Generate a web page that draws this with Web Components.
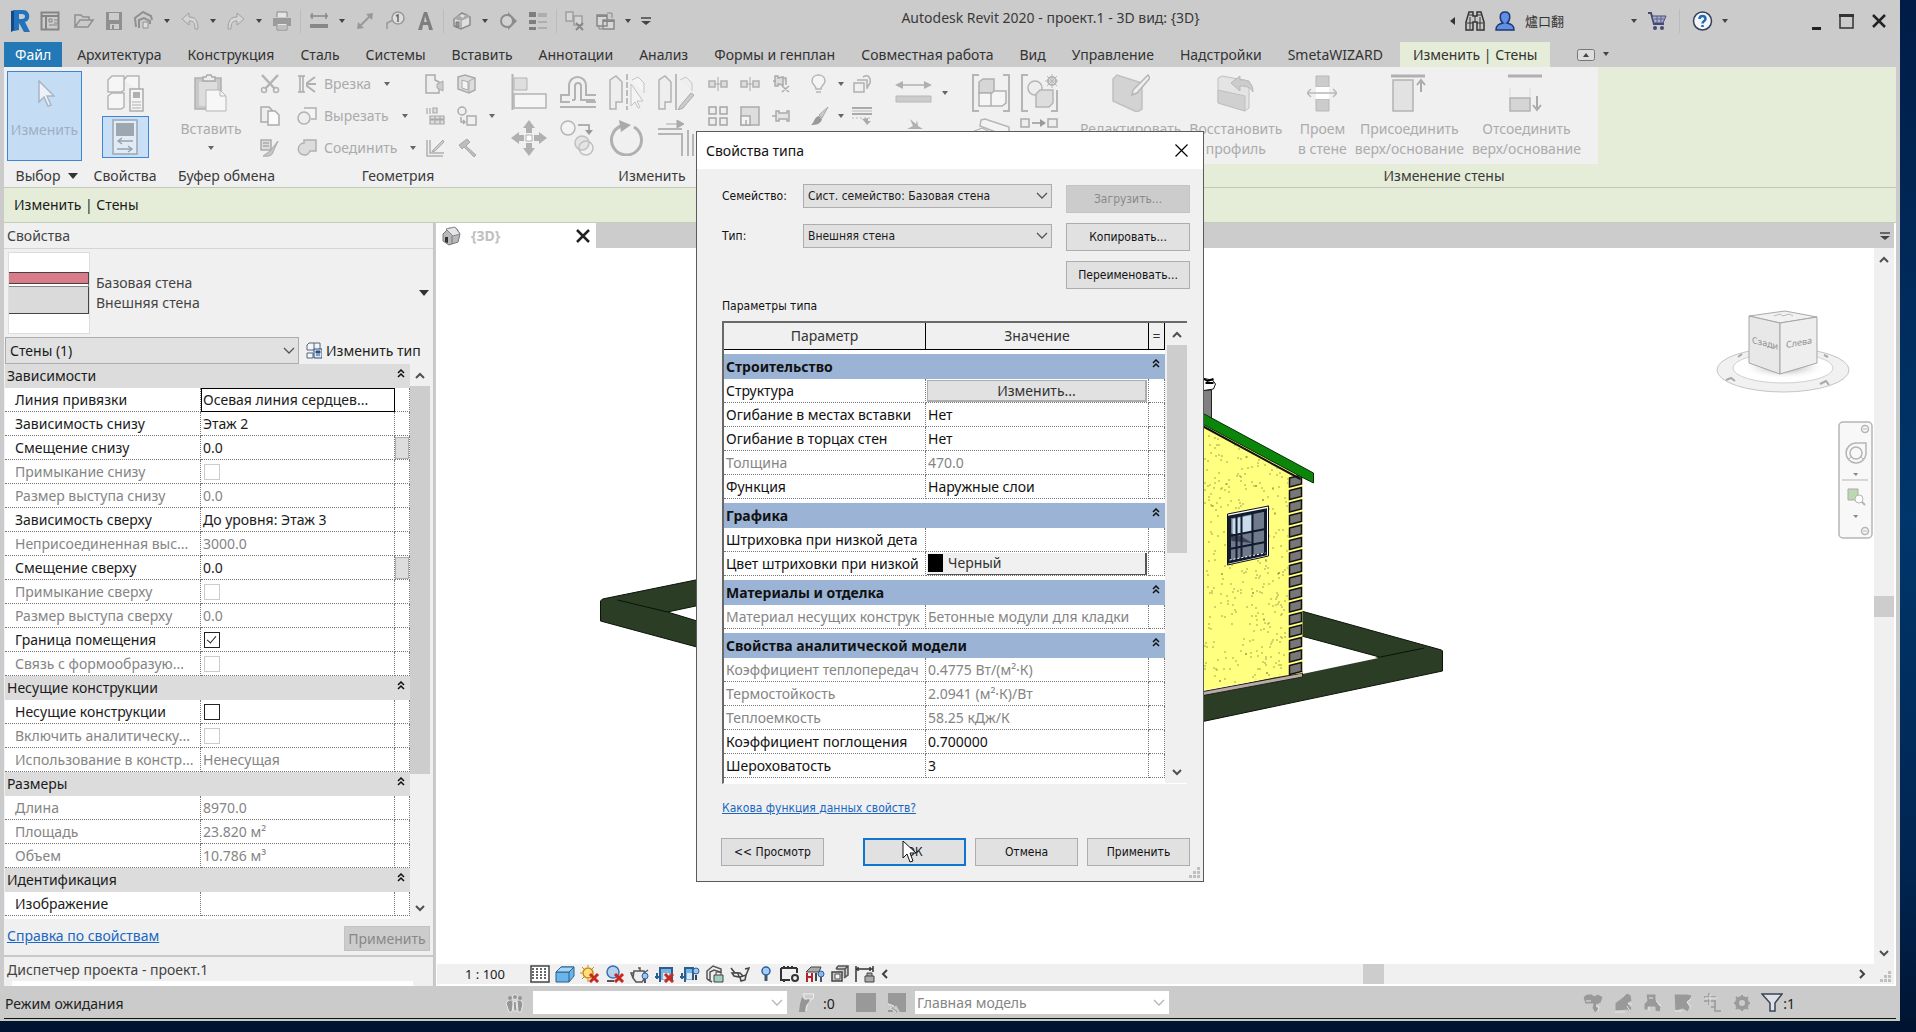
<!DOCTYPE html>
<html lang="ru">
<head>
<meta charset="utf-8">
<title>Autodesk Revit 2020 - проект.1</title>
<style>
  html, body { height: 100%; }
  body {
    margin: 0;
    font: 14px/20px "Noto Sans", "Open Sans", "Noto Sans CJK SC", sans-serif;
    color: #1b1b1b;
    background: linear-gradient(#001c46, #00366b 50%, #002450 85%, #001330);
  }
</style>
</head>
<body>
<rv-app></rv-app>

<script>
  // name: [width, height, markup]
  const ICONS = {
    logo: [20, 24, '<path d="M1 2l4-1v20l-4 2z" fill="#134a86"/><path fill-rule="evenodd" d="M4 1h9c8 0 8 11 2 12l5 10h-6L9 14v7l-5 1zM9 5v5h3c4 0 4-5 0-5z" fill="#2273bb"/>'],
    homewin: [20, 20, '<path d="M1.500 1.500h17v17h-17zM1 5h18M6 5v13" fill="none" stroke="#858585" stroke-width="2"/><path d="M9 8h3v3H9zM14 9h4M14 12h4M9 14h8" stroke="#858585" fill="none"/>'],
    open: [22, 18, '<path d="M2 15V3h6l2 2h6v3M2 15l5-7h13l-5 7z" fill="none" stroke="#909090" stroke-width="1.500"/>'],
    save: [20, 20, '<path d="M2 1h16v18H2z" fill="#909090"/><path d="M5 2h10v7H5zM6 13h9v5H6z" fill="#ccc"/><path d="M8 14h2v4H8z" fill="#909090"/>'],
    sync: [22, 20, '<path d="M3 16L2 7l8-6 8 4 1 4M6 17V9l5-2 6 3v3" fill="none" stroke="#909090" stroke-width="2"/><path d="M10 11h5v6h-5z" fill="#ddd" stroke="#909090"/>'],
    undo: [20, 20, '<path d="M9 2L2 8l7 6v-4c4 0 6 1 6 8h3C18 9 15 6 9 6z" fill="#d5d5d5" stroke="#a0a0a0"/>'],
    redo: [20, 20, '<path d="M11 2l7 6-7 6v-4c-4 0-6 1-6 8H2C2 9 5 6 11 6z" fill="#d5d5d5" stroke="#a0a0a0"/>'],
    print: [20, 20, '<path d="M5 6V1h10v5M5 18v-6h10v7H5z" fill="#e5e5e5" stroke="#888"/><path d="M1 7h18v8h-4v-2H5v2H1z" fill="#9b9b9b"/><path d="M6 15h8M6 17h8" stroke="#999"/>'],
    align2: [20, 20, '<path d="M1 5h18M3 2v6M17 2v6" stroke="#888" stroke-width="1.500"/><path d="M1 13h18v4H1z" fill="#888"/>'],
    diag: [20, 20, '<path d="M4 16L16 4" stroke="#999" stroke-width="2"/><path d="M2 18l1-7 6 6zM18 2l-1 7-6-6z" fill="#999"/>'],
    tag: [20, 20, '<circle cx="13" cy="7" r="6" fill="#ddd" stroke="#999" stroke-width="1.500"/><path d="M8 9L2 12v6" fill="none" stroke="#999" stroke-width="1.500"/><path d="M11 5l2-1v7" fill="none" stroke="#666" stroke-width="1.500"/>'],
    bigA: [20, 20, '<path d="M3 19L9 1h3l6 18h-4l-1-5H8l-1 5zM9 11h3l-2-6z" fill="#7e7e7e"/>'],
    house: [20, 20, '<path d="M2 8l8-6 8 4v8l-9 4-7-3z" fill="#dedede" stroke="#8b8b8b" stroke-width="1.500"/><path d="M2 8l4-4 5 3 4-5 3 4-9 4z" fill="#a9a9a9"/><path d="M9 10v8" stroke="#888"/><path d="M4 11h3v5H4z" stroke="#777" fill="#999"/>'],
    section: [20, 20, '<path d="M10 1l9 9-9 9z" fill="#8c8c8c"/><circle cx="9" cy="10" r="6" fill="#d2d2d2" stroke="#8c8c8c" stroke-width="2"/>'],
    lines: [20, 20, '<path d="M1 1h7v5H1zM1 9h7v4H1zM1 16h7v3H1z" fill="#7e7e7e"/><path d="M10 3h9M10 5h9M10 11h9M10 17h9" stroke="#909090"/>'],
    closewin: [20, 20, '<path d="M1 1h7v9H1zM9 5h8v9H9z" fill="#d5d5d5" stroke="#a0a0a0" stroke-width="1.500"/><path d="M11 12l7 7M18 12l-7 7" stroke="#888" stroke-width="2"/>'],
    switchwin: [20, 20, '<path d="M2 4h10v11H2zM8 9h11v9H8z" fill="#d8d8d8" stroke="#888" stroke-width="1.500"/><path d="M2 5h10M8 10h11" stroke="#888" stroke-width="2"/><path d="M12 2h5v5M4 14v4h3" stroke="#888" fill="none"/>'],
    down: [6, 5, '<path d="M0 0h6L3 4z" fill="#444"/>'],
    bigdown: [10, 6, '<path d="M0 0h10L5 6z" fill="#333"/>'],
    left: [5, 8, '<path d="M5 0v8L0 4z" fill="#333"/>'],
    custom: [10, 8, '<path d="M0 1h10" stroke="#444" stroke-width="1.500"/><path d="M0 4h10L5 8z" fill="#444"/>'],
    binoc: [20, 20, '<path d="M4 1h4v4h4V1h4l3 10v8h-7v-8H8v8H1v-8z" fill="#c8c8c8" stroke="#333" stroke-width="1.500"/><path d="M2 12h6M12 12h6M10 5v6M4 4h4M12 4h4M5 6v12M15 6v12" stroke="#333"/>'],
    person: [20, 20, '<path d="M10 1c-7 0-5 9-2 11-4 1-7 2-7 7h18c0-5-3-6-7-7 3-2 5-11-2-11z" fill="#5f8fe6" stroke="#1f3970" stroke-width="1.500"/>'],
    cart: [20, 20, '<path d="M1 2h3l3 11h10" fill="none" stroke="#444a70" stroke-width="2"/><path d="M5 5h14l-3 7H7z" fill="#a9aed0" stroke="#444a70"/><path d="M7 8h10M10 5v7M14 5v7" stroke="#5d628c"/><circle cx="8" cy="17" r="2" fill="#444a70"/><circle cx="15" cy="17" r="2" fill="#444a70"/>'],
    help: [21, 20, '<circle cx="10.500" cy="10" r="9" fill="#f2f6fb" stroke="#35405c" stroke-width="1.500"/><path d="M7.500 8c0-4 6-4 6 0 0 2-3 2-3 4.500M10.500 14v2" fill="none" stroke="#2468b4" stroke-width="2.500"/>'],
    min: [10, 20, '<path d="M0 16h9v3H0z" fill="#222"/>'],
    max: [16, 20, '<path d="M1 4h13v13H1z" fill="none" stroke="#333" stroke-width="1.500"/><path d="M0 3h15v3H0z" fill="#333"/>'],
    close: [14, 14, '<path d="M1 1l12 12M13 1L1 13" stroke="#222" stroke-width="2.500"/>'],
    thinx: [13, 13, '<path d="M.5.500l12 12M12.500.5l-12 12" stroke="#000" stroke-width="1.200"/>'],
    ribbontoggle: [18, 12, '<rect x=".5" y=".5" width="17" height="11" rx="2" fill="#ddd" stroke="#777"/><path d="M6 8h6L9 4z" fill="#444"/>'],
    chevdown: [12, 8, '<path d="M1 1l5 5 5-5" fill="none" stroke="currentColor" stroke-width="1.300"/>'],
    sup: [12, 9, '<path d="M2 7l4-4 4 4" fill="none" stroke="#505050" stroke-width="2"/>'],
    sdown: [12, 9, '<path d="M2 2l4 4 4-4" fill="none" stroke="#505050" stroke-width="2"/>'],
    sright: [9, 12, '<path d="M2 2l4 4-4 4" fill="none" stroke="#404040" stroke-width="2"/>'],
    sleft: [9, 12, '<path d="M7 2L3 6l4 4" fill="none" stroke="#404040" stroke-width="2"/>'],
    fold: [8, 9, '<path d="M1 4l3-3 3 3M1 8l3-3 3 3" fill="none" stroke="#111" stroke-width="1.500"/>'],
    grip: [12, 12, '<path d="M8 0h3v3H8zM4 4h3v3H4zM8 4h3v3H8zM0 8h3v3H0zM4 8h3v3H4zM8 8h3v3H8z" fill="#c0c0c0"/>'],
    cursor: [16, 24, '<path d="M1 1v17l4-4 3 8 3-1-3-8h6z" fill="#fff" stroke="#111"/>'],

    // ribbon
    arrow: [20, 28, '<path d="M4 1v21l5-5 4 9 3-1-4-9h7z" fill="#eef2f8" stroke="#a9b4c4" stroke-width="1.500"/>'],
    types: [37, 38, '<path d="M1 6l4-4h12v14l-3 2H1zM17 6l3-4h12v14M1 22l4-3h12v14l-3 2H1z" fill="#f6f6f6" stroke="#b5b5b5" stroke-width="1.500"/><path d="M23 15h13v22H23z" fill="#f4f4f4" stroke="#aaa" stroke-width="1.500"/><path d="M26 18h7v6h-7z" fill="#b0b0b0"/><path d="M25 28h9M25 31h9M25 34h9" stroke="#b0b0b0"/>'],
    props: [26, 36, '<path d="M1 1h24v34H1z" fill="#e2ebf4" stroke="#9ba7b5" stroke-width="1.500"/><path d="M4 4h18v13H4z" fill="#9da7b2"/><path d="M7 22h14M5 30h14M10 19l-4 3 4 3M16 27l4 3-4 3" fill="none" stroke="#98a3b0" stroke-width="1.500"/>'],
    paste: [34, 38, '<path d="M1 4h26v31H1z" fill="#c8c8c8" stroke="#b0b0b0" stroke-width="1.500"/><path d="M5 8h18v24H5z" fill="#ddd"/><path d="M9 7V3h3l1-2h4l1 2h3v4z" fill="#eee" stroke="#aaa" stroke-width="1.500"/><path d="M12 16h14l6 6v15H12z" fill="#f7f7f7" stroke="#b5b5b5"/><path d="M26 16v6h6" fill="none" stroke="#b5b5b5"/>'],
    cut: [20, 20, '<path d="M2 1l13 14M18 1L5 15" stroke="#b3b3b3" stroke-width="2.500"/><circle cx="4" cy="16" r="2.500" fill="none" stroke="#b3b3b3" stroke-width="1.500"/><circle cx="16" cy="16" r="2.500" fill="none" stroke="#b3b3b3" stroke-width="1.500"/>'],
    copydoc: [20, 20, '<path d="M1 1h8l3 3v12H1z" fill="#eee" stroke="#aaa" stroke-width="1.500"/><path d="M8 5h7l4 4v10H8z" fill="#fafafa" stroke="#aaa" stroke-width="1.500"/>'],
    match: [20, 20, '<path d="M1 2h10v10H1zM3 5h6M3 8h6" fill="#ddd" stroke="#aaa" stroke-width="1.500"/><path d="M18 3l-8 10-7 5c6 1 10-1 10-4z" fill="#c4c4c4" stroke="#aaa"/>'],
    cope: [20, 20, '<path d="M1 2h7M1 18h7M3 2v16M6 2v16" stroke="#aaa" stroke-width="1.500"/><path d="M18 3l-8 6v3l8 6M10 10h9" fill="none" stroke="#b0b0b0" stroke-width="2"/>'],
    cutgeo: [20, 20, '<path d="M7 2h12v11h-5" fill="#f4f4f4" stroke="#b0b0b0" stroke-width="1.500"/><circle cx="7" cy="12" r="6" fill="#eee" stroke="#b0b0b0" stroke-width="1.500"/>'],
    joingeo: [20, 20, '<path d="M7 2h12v11h-6a6 6 0 1 1-6-8z" fill="#dcdcdc" stroke="#b0b0b0" stroke-width="1.500"/>'],
    g1: [20, 20, '<path d="M1 1h9v5l4 2v11H1z" fill="#eee" stroke="#aaa" stroke-width="1.500"/><path d="M12 10l6-3v10l-6-3z" fill="#ccc" stroke="#aaa"/>'],
    g2: [20, 20, '<path d="M1 3l7-2 10 3v12l-6 3-11-4z" fill="#ddd" stroke="#aaa" stroke-width="1.500"/><path d="M5 6v8l6 2V8z" fill="#f4f4f4" stroke="#aaa"/><path d="M12 7l6-3M12 7v12" stroke="#aaa"/>'],
    g3: [20, 20, '<path d="M2 2v6M5 2v6M8 2h4v5H8zM5 10h14v3H5zM5 14h14v4H5zM10 10v8M15 10v8" fill="#ddd" stroke="#aaa" stroke-width="1.200"/>'],
    g4: [20, 20, '<circle cx="5" cy="5" r="4" fill="none" stroke="#aaa" stroke-width="1.500"/><path d="M10 10h9v9h-9zM4 11v5h4M6 14l2 2-2 2" fill="none" stroke="#aaa" stroke-width="1.500"/>'],
    g5: [20, 20, '<path d="M2 2v16h16M5 2v13h14" fill="none" stroke="#b0b0b0" stroke-width="1.500"/><path d="M18 2L8 12l-1 2 3-1L19 4z" fill="#ccc" stroke="#aaa"/>'],
    g6: [20, 20, '<path d="M2 7l8-6 3 3-4 4 10 9-2 2-10-10-2 2z" fill="#bdbdbd" stroke="#aaa"/>'],
    align: [36, 36, '<path d="M1.500 0v36" stroke="#b3b3b3" stroke-width="2"/><path d="M3 4h13v12H3z" fill="#dedede" stroke="#b3b3b3"/><path d="M3 20h32v14H3z" fill="#f5f5f5" stroke="#b3b3b3" stroke-width="1.500"/>'],
    offset: [36, 36, '<path d="M0 33h36M0 28h10M26 28h10M1 27v-6h8v-9c0-12 17-12 17 0v9h10M15 26h-3M15 26V12c0-4 6-4 6 0v14h14" fill="none" stroke="#b3b3b3" stroke-width="2"/>'],
    mirror: [36, 36, '<path d="M1 35V6l6-4 6 6v20H7v7z" fill="#eee" stroke="#b3b3b3" stroke-width="1.500"/><path d="M18 0v36" stroke="#aaa" stroke-width="1.500" stroke-dasharray="6 2"/><path d="M22 10v22l4-4 3 6 2-1-3-6h6zM23 6l6-3 6 6v10" fill="#f4f4f4" stroke="#c2c2c2"/>'],
    mirrordraw: [36, 36, '<path d="M1 35V6l6-4 6 6v20H7v7z" fill="#eee" stroke="#b3b3b3" stroke-width="1.500"/><path d="M18 0v36" stroke="#aaa" stroke-width="1.500"/><path d="M22 6l6-3 6 6v8" fill="#eee" stroke="#c6c6c6"/><path d="M33 19L22 32l-2 4 5-2 11-13z" fill="#ccc" stroke="#aaa"/>'],
    move: [36, 36, '<path d="M18 0l6 8h-3v5h-6V8h-3zM18 36l6-8h-3v-5h-6v5h-3zM0 18l8-6v3h5v6H8v3zM36 18l-8-6v3h-5v6h5v3z" fill="#b0b0b0"/><path d="M15 15h6v6h-6z" fill="#fff" stroke="#b0b0b0"/>'],
    copy: [36, 36, '<circle cx="8" cy="8" r="7" fill="#f3f3f3" stroke="#b5b5b5" stroke-width="1.500"/><path d="M18 5h11v8" fill="none" stroke="#999" stroke-width="1.500"/><path d="M25 10h8l-4 5z" fill="#999"/><circle cx="22" cy="23" r="7" fill="#e4e4e4" stroke="#c0c0c0" stroke-width="1.500"/><circle cx="26" cy="28" r="7" fill="none" stroke="#c0c0c0" stroke-width="1.500"/>'],
    rotate: [36, 36, '<path d="M12 6a15 15 0 1 0 13 1" fill="none" stroke="#b0b0b0" stroke-width="3"/><path d="M10 0l12 5-10 7z" fill="#aaa"/>'],
    trim: [36, 36, '<path d="M0 9h24M0 14h24v22M30 10v26M35 14v22" stroke="#b5b5b5" stroke-width="2" fill="none"/><path d="M8 4h14M19 0l7 4-7 4z" stroke="#aaa" fill="#aaa"/>'],
    split: [20, 20, '<path d="M1 7h6v6H1zM13 7h6v6h-6z" fill="#ddd" stroke="#b0b0b0" stroke-width="1.500"/><path d="M10 3v14M7 10h6" stroke="#aaa"/>'],
    array: [20, 20, '<path d="M1 1h7v7H1zM12 1h7v7h-7zM1 12h7v7H1zM12 12h7v7h-7z" fill="#eee" stroke="#a5a5a5" stroke-width="1.500"/>'],
    scale: [20, 20, '<path d="M1 1h18v18H1z" fill="#ddd" stroke="#aaa" stroke-width="1.500"/><path d="M1 10h9v9H1zM6 14v5" fill="#f4f4f4" stroke="#aaa" stroke-width="1.500"/>'],
    unpin: [20, 20, '<path d="M3 2h3v2l5-1v8l-5-1v2H3zM1 7h3M11 4h3v7M10 12l7 6M17 12l-7 6" fill="#ddd" stroke="#aaa" stroke-width="1.500"/>'],
    pin: [20, 20, '<path d="M4 5h3v2h8V5h2v10h-2v-2H7v2H4zM0 10h4" fill="#e4e4e4" stroke="#aaa" stroke-width="1.500"/>'],
    bulb: [20, 20, '<path d="M6 15c0-4-4-4-4-8 0-8 13-8 13 0 0 4-4 4-4 8zM6 18h5" fill="#f4f4f4" stroke="#b5b5b5" stroke-width="1.500"/>'],
    brush: [20, 20, '<path d="M18 1L9 9l3 3z" fill="#ccc" stroke="#aaa"/><path d="M9 10l3 3c-1 5-6 6-11 6 3-2 3-8 8-9z" fill="#999"/>'],
    boxes: [20, 20, '<path d="M2 9h10v9H2zM5 6h10v9M11 3c5-3 8 0 7 6l-3 5" fill="none" stroke="#b0b0b0" stroke-width="1.500"/>'],
    linework: [20, 20, '<path d="M0 2h20M0 8h20" stroke="#aaa" stroke-width="2"/><path d="M0 5h20" stroke="#bbb"/><path d="M0 12h20" stroke="#bbb" stroke-dasharray="2 2"/><path d="M10 13l6-1v3h3l-4 4-3-4z" fill="#aaa"/>'],
    measure: [37, 38, '<path d="M2 11h33" stroke="#b0b0b0" stroke-width="1.500"/><path d="M0 11l8-4v8zM37 11l-8-4v8z" fill="#b0b0b0"/><path d="M1 22h35v6H1z" fill="#ccc" stroke="#b8b8b8"/>'],
    angle: [20, 20, '<path d="M6 1l6 5 1-4 1 6 5 3H3l6-3z" fill="#b0b0b0"/>'],
    group: [38, 38, '<path d="M7 1H1v36h6M31 1h6v36h-6" fill="none" stroke="#b5b5b5" stroke-width="2"/><path d="M7 8l4-3h11v14H7z" fill="#d6d6d6" stroke="#b0b0b0" stroke-width="1.500"/><path d="M7 19h12v13H7zM19 20l3-3h12v12l-4 3H19z" fill="#f5f5f5" stroke="#b0b0b0" stroke-width="1.500"/>'],
    similar: [37, 38, '<path d="M7 1H1v36h6M30 37h6V16" fill="none" stroke="#b5b5b5" stroke-width="2"/><circle cx="14" cy="14" r="7" fill="#eee" stroke="#b5b5b5" stroke-width="1.500"/><path d="M15 20l4-4h13v13l-4 4H15z" fill="#ddd" stroke="#b5b5b5" stroke-width="1.500"/><circle cx="31" cy="7" r="4" fill="none" stroke="#b5b5b5" stroke-width="2"/><path d="M31 0v14M24 7h14M26 2l10 10M36 2L26 12" stroke="#b5b5b5"/>'],
    assembly: [38, 20, '<path d="M9 2l4-1 24 8v10L8 8z" fill="#f3f3f3" stroke="#b5b5b5" stroke-width="1.500"/><path d="M0 14l10-4 16 8" stroke="#aaa" fill="none"/>'],
    parts: [38, 20, '<path d="M1 1h8v8H1zM28 1h9v8h-9z" fill="#eee" stroke="#aaa" stroke-width="1.500"/><path d="M12 5h10" stroke="#999" stroke-width="1.500"/><path d="M20 1l6 4-6 4z" fill="#999"/>'],
    profile: [38, 38, '<path d="M1 5l4-4 25 8v26l-5 3L1 27z" fill="#d3d3d3" stroke="#c0c0c0" stroke-width="1.500"/><path d="M36 1L21 16l-1 5 5-2L38 4z" fill="#eee" stroke="#b5b5b5" stroke-width="1.500"/>'],
    reset: [38, 38, '<path d="M1 4l4-2 27 5v27l-4 3-27-8z" fill="#e4e4e4" stroke="#c0c0c0"/><path d="M1 16l27 6v15L1 29z" fill="#d0d0d0" stroke="#c0c0c0"/><path d="M14 9l9-7v4c9-1 13 4 13 12-3-5-7-6-13-6v5z" fill="#ccc" stroke="#b8b8b8"/>'],
    opening: [30, 38, '<path d="M9 2h13v11H9zM9 25h13v12H9z" fill="#ccc" stroke="#b8b8b8"/><path d="M9 13h13v12H9z" fill="#fff"/><path d="M1 19h28M4 15l-4 4 4 4M26 15l4 4-4 4" stroke="#b8b8b8" fill="none" stroke-width="1.500"/>'],
    attach: [36, 38, '<path d="M0 2h34" stroke="#b0b0b0" stroke-width="3"/><path d="M2 6h20v31H2z" fill="#e2e2e2" stroke="#b3b3b3" stroke-width="1.500"/><path d="M30 18V8M26 11l4-5 4 5" fill="none" stroke="#aaa" stroke-width="2"/>'],
    detach: [36, 38, '<path d="M0 2h34" stroke="#b0b0b0" stroke-width="3"/><path d="M2 14v10M22 14v10" stroke="#ddd"/><path d="M2 24h20v13H2z" fill="#d5d5d5" stroke="#b3b3b3" stroke-width="1.500"/><path d="M29 22v12M25 31l4 5 4-5" fill="none" stroke="#aaa" stroke-width="2"/>'],
    edittype: [16, 17, '<path d="M1 3l2-2h5v7H1zM8 1h6v6M1 11h6v5H1z" fill="#f4f7fa" stroke="#56657a"/><path d="M8 7h8v9H8z" fill="#dfe9f4" stroke="#2a4e80"/><path d="M10 9h4v2h-4zM10 13h4" stroke="#2a4e80" fill="#2a4e80"/>'],
    viewhouse: [20, 20, '<path d="M2 8l6-6 8 1 3 5-2 8-9 3-6-4z" fill="#b9b9b9" stroke="#777"/><path d="M5 3l9-2 5 7-7 2z" fill="#e3e6ea" stroke="#888"/><path d="M4 11h3v6l-3-1z" fill="#333"/><path d="M11 10v8" stroke="#777"/>'],

    // view control bar
    detail: [20, 18, '<path d="M1 1h18v16H1z" fill="#fff" stroke="#444" stroke-width="1.500"/><path d="M2 4h16M2 7h16M2 10h16M2 13h16" stroke="#666" stroke-width="2" stroke-dasharray="2 2"/>'],
    cube: [20, 18, '<path d="M1 7l5-5h13v9l-5 6H1z" fill="#6ab4e8" stroke="#2b5f8e"/><path d="M1 7h13v10M14 7l5-5" fill="none" stroke="#2b5f8e"/><path d="M6 2h13l-5 5H1z" fill="#a7d6f4" stroke="#2b5f8e"/>'],
    sun: [20, 18, '<circle cx="8" cy="8" r="5" fill="#ffdf7a" stroke="#c98a12" stroke-width="1.500"/><path d="M8 0v2M8 14v3M0 8h2M2 2l2 2M14 2l-2 2M2 14l2-2" stroke="#c98a12"/><path d="M10 9l8 8M18 9l-8 8" stroke="#c8281e" stroke-width="3"/>'],
    shadow: [20, 18, '<circle cx="8" cy="7" r="6" fill="#b4d2f0" stroke="#3e6fae" stroke-width="1.500"/><path d="M2 16h7" stroke="#555" stroke-width="2"/><path d="M10 9l8 8M18 9l-8 8" stroke="#c8281e" stroke-width="3"/>'],
    pot: [20, 18, '<path d="M4 6h10l1 7-3 4H6l-3-4zM8 3h2v3M4 8H1l2 5M14 8l4-3" fill="#eee" stroke="#555" stroke-width="1.500"/><circle cx="15" cy="11" r="3" fill="#9cc6f2" stroke="#2b5f9e"/><path d="M15 14v4" stroke="#555" stroke-width="2"/>'],
    crop: [20, 18, '<path d="M5 3h11v12H5z" fill="#79b4e0"/><path d="M0 12h5M5 17V3h12v13M2 8v6" stroke="#2c5d8e" stroke-width="2" fill="none"/><path d="M8 8h6v6H8z" fill="#d9eaf7"/><path d="M10 9l8 8M18 9l-8 8" stroke="#c8281e" stroke-width="3"/>'],
    cropview: [20, 18, '<path d="M5 3h9v12H5z" fill="#79b4e0"/><path d="M0 12h5M5 17V3h8v12M2 8v6" stroke="#2c5d8e" stroke-width="2" fill="none"/><path d="M7 8h5v6H7z" fill="#d9eaf7"/><circle cx="16" cy="6" r="3" fill="#9cc6f2" stroke="#2b5f9e"/><path d="M16 10v5" stroke="#444" stroke-width="2"/>'],
    lock: [20, 18, '<path d="M2 14V6l6-5 8 3v4M5 16V7l4-2 6 2M2 14l5 3" fill="none" stroke="#555" stroke-width="1.500"/><path d="M9 10h9v7H9z" fill="#9fd0c0" stroke="#444"/><path d="M11 10V7h5v3" fill="none" stroke="#444"/>'],
    glasses: [20, 18, '<path d="M1 3l4 5h5l3 3M16 10l3-7-4 1" fill="none" stroke="#444" stroke-width="1.500"/><path d="M2 8h6l1 4-5-1zM10 12l6-2-1 5-4 1z" fill="#eee" stroke="#444" stroke-width="1.500"/>'],
    reveal: [20, 18, '<circle cx="11" cy="6" r="4" fill="#a6ccf5" stroke="#2b5f9e" stroke-width="1.500"/><path d="M11 10v6" stroke="#456" stroke-width="3"/>'],
    temp: [20, 18, '<path d="M1 3h16M1 3v12h9M17 3v5M4 1v3M8 1v3M12 1v3M4 14v3" stroke="#333" stroke-width="2" fill="none"/><circle cx="15" cy="13" r="3" fill="none" stroke="#333" stroke-width="2"/>'],
    analytic: [20, 18, '<path d="M1 7l5-5h10l-2 5z" fill="#aaa" stroke="#444"/><path d="M2 8v9M7 8v9M2 12h5" stroke="#b1232d" stroke-width="2"/><path d="M11 8v8" stroke="#444" stroke-width="2"/><circle cx="16" cy="9" r="3" fill="#86b7f0" stroke="#2b5f9e"/><path d="M16 12v5" stroke="#456" stroke-width="2"/>'],
    displace: [20, 18, '<path d="M8 1h10v9l-4 3M6 4h9v9M8 1L6 4M18 1l-3 3" fill="#ccc" stroke="#555" stroke-width="1.500"/><path d="M2 7h10v9H2z" fill="#ccc" stroke="#444" stroke-width="1.500"/><path d="M5 9h5v5H5z" fill="#f5f5f5" stroke="#555"/>'],
    dims: [20, 18, '<path d="M1 1v16M1 4h17M18 1v6M3 2v4M15 2v4" stroke="#333" stroke-width="1.500"/><path d="M10 11h9v6h-9zM12 11V8h5v3" fill="#aaa" stroke="#444"/>'],

    // status bar
    workset: [20, 20, '<path d="M4 7h4v5l-1 7H4L1 10zM12 7h4l2 4-2 8h-3zM8 9l3-1 1 10H9z" fill="#969696" stroke="#e8e8e8"/><circle cx="10" cy="4" r="2.500" fill="#969696" stroke="#e8e8e8"/><circle cx="5" cy="5" r="2" fill="#969696"/><circle cx="15" cy="5" r="2" fill="#969696"/>'],
    request: [17, 20, '<path d="M5 1h11l-1 5H7z" fill="#ccc" stroke="#eee"/><path d="M4 4l3 3 4-1 1 3-4 4-1 6H1l1-8z" fill="#969696"/><path d="M13 7l-4 5-1 6" fill="none" stroke="#eee"/>'],
    square: [20, 20, '<path d="M0 0h20v19H0z" fill="#999"/>'],
    option: [20, 20, '<path d="M1 0h18v19h-6l-4-7-8-3z" fill="#999"/><path d="M1 9l7 3-4 3 6 4M1 18h5" fill="none" stroke="#999" stroke-width="2"/><path d="M1 11l6 2-4 2 6 4" fill="none" stroke="#e6e6e6"/>'],
    link1: [20, 20, '<path d="M0 4l4-3h5l2 2 4-2 5 3-2 6-5 2 3 4-4 4-3-5 1-4H2z" fill="#999" stroke="#ccc"/><path d="M3 8h5M13 13l3 1-1 4" fill="none" stroke="#e6e6e6"/>'],
    link2: [20, 20, '<path d="M2 18V10l8-6 4-4 4 2 1 6-4 2 4 5-2 4-3-2z" fill="#999" stroke="#ccc"/><path d="M2 19h10M15 11h4M14 13l3 5" fill="none" stroke="#e6e6e6"/>'],
    link3: [20, 20, '<path d="M3 1h10v6l3 5 2 2-1 5-5-1v-4H5v3H1v-6l3-3z" fill="#999" stroke="#ccc"/><path d="M6 5h4M13 8l5 5M6 14v4" fill="none" stroke="#e6e6e6"/>'],
    link4: [20, 20, '<path d="M1 1h13l5 1-2 5-3 2 3 5-2 5-5-3-8 2z" fill="#999" stroke="#ccc"/><path d="M2 18h7M18 6l-4 3 4 5" fill="none" stroke="#e6e6e6"/>'],
    link5: [20, 20, '<path d="M6 0v12M1 4h12M1 8h12M12 8v10h6M8 14h4" stroke="#999" stroke-width="1.500" fill="none"/><path d="M7 1v11M2 5h12" stroke="#e6e6e6"/>'],
    gear: [18, 20, '<circle cx="9" cy="10" r="5" fill="#ccc" stroke="#9b9b9b" stroke-width="4"/><path d="M9 2v2M9 16v2M1 10h2M15 10h2M3 4l2 2M15 4l-2 2M3 16l2-2M15 16l-2-2" stroke="#9b9b9b" stroke-width="2"/>'],
    funnel: [22, 20, '<path d="M1 1h20l-7 9v8h-5v-8z" fill="#dde2ea" stroke="#3d4453" stroke-width="1.500"/>'],
  };

  const svg = (name) => {
    const [w, h, body] = ICONS[name];
    return `<svg width="${w}" height="${h}" viewBox="0 0 ${w} ${h}" aria-hidden="true">${body}</svg>`;
  };

  class Base extends HTMLElement {
    constructor() {
      super();
      this.attachShadow({ mode: 'open' });
    }
    connectedCallback() {
      this.shadowRoot.innerHTML = this.render();
    }
  }

  class Icon extends Base {
    render() {
      return `
        <style>
          :host { display: inline-flex; flex: none; }
          svg { display: block; }
        </style>
        ${svg(this.getAttribute('name'))}
      `;
    }
  }
  customElements.define('rv-icon', Icon);

  class TitleBar extends Base {
    render() {
      const tool = (name, label) => `<button aria-label="${label}"><rv-icon name="${name}"></rv-icon></button>`;
      const arrow = '<rv-icon name="down"></rv-icon>';
      return `
        <style>
          :host { display: flex; align-items: center; height: 42px; }
          .group { display: flex; align-items: center; gap: 10px; }
          .quick { padding-left: 6px; }
          button { border: 0; padding: 0; background: none; width: 20px; height: 24px; display: flex; align-items: center; justify-content: center; }
          .quick button:nth-child(3) { margin-left: 4px; }
          button.tiny { width: 10px; }
          i { width: 1px; height: 24px; background: #bcbcbc; }
          .quick i { margin: 0 -2px; }
          .account i { margin: 0 2px; }
          h1 { flex: 1; margin: 0 0 6px; text-align: center; font-size: 14px; font-weight: 400; color: #3a3a3a; white-space: nowrap; }
          .user { width: 96px; font-size: 13px; color: #333; }
          .win { margin-left: 84px; gap: 17px; padding-right: 10px; }
          .win button { width: auto; }
        </style>
        <div class="group quick">
          ${tool('logo', 'Revit')}${tool('homewin', 'Главная')}${tool('open', 'Открыть')}${tool('save', 'Сохранить')}${tool('sync', 'Синхронизация')}${arrow}
          ${tool('undo', 'Отменить')}${arrow}${tool('redo', 'Повторить')}${arrow}${tool('print', 'Печать')}<i></i>
          ${tool('align2', 'Измерить')}${arrow}${tool('diag', 'Размер')}${tool('tag', 'Марка')}${tool('bigA', 'Текст')}<i></i>
          ${tool('house', '3D вид')}${arrow}${tool('section', 'Разрез')}${tool('lines', 'Тонкие линии')}<i></i>
          ${tool('closewin', 'Закрыть неактивные')}${tool('switchwin', 'Переключить окна')}${arrow}
          <button class="tiny" aria-label="Настройка панели"><rv-icon name="custom"></rv-icon></button>
        </div>
        <h1>Autodesk Revit 2020 - проект.1 - 3D вид: {3D}</h1>
        <div class="group account">
          <rv-icon name="left"></rv-icon>
          ${tool('binoc', 'Поиск')}${tool('person', 'Профиль')}
          <span class="user">爐口翻</span>${arrow}
          ${tool('cart', 'Магазин')}<i></i>${tool('help', 'Справка')}${arrow}
        </div>
        <div class="group win">
          ${tool('min', 'Свернуть')}${tool('max', 'Развернуть')}${tool('close', 'Закрыть')}
        </div>
      `;
    }
  }
  customElements.define('rv-title-bar', TitleBar);

  class Tabs extends Base {
    render() {
      const tabs = ['Архитектура', 'Конструкция', 'Сталь', 'Системы', 'Вставить', 'Аннотации', 'Анализ',
        'Формы и генплан', 'Совместная работа', 'Вид', 'Управление', 'Надстройки', 'SmetaWIZARD'];
      return `
        <style>
          :host { display: flex; height: 25px; }
          button { border: 0; margin: 0; padding: 0 13px; background: none; font: inherit; line-height: 25px; color: #333; white-space: nowrap; }
          .file { background: #2379b5; color: #fff; padding: 0 11px; margin-right: 2px; }
          .current { background: #e5edd8; margin-left: 4px; }
          .toggle { display: flex; align-items: center; gap: 8px; margin-left: 14px; }
        </style>
        <button class="file">Файл</button>
        ${tabs.map((t) => `<button>${t}</button>`).join('')}
        <button class="current">Изменить | Стены</button>
        <button class="toggle" aria-label="Свернуть ленту"><rv-icon name="ribbontoggle"></rv-icon><rv-icon name="down"></rv-icon></button>
      `;
    }
  }
  customElements.define('rv-tabs', Tabs);

  class Panel extends Base {
    render() {
      return `
        <style>
          :host { display: flex; flex-direction: column; box-sizing: border-box; width: var(--w); flex: none; background: #f0f0f0; }
          :host([context]) { background: #e5edd8; }
          .body { display: flex; box-sizing: border-box; height: 97px; padding-top: 7px; background: #f0f0f0; }
          .title { display: flex; justify-content: center; align-items: center; gap: 8px; height: 23px; line-height: 23px; color: #3a3a3a; white-space: nowrap; }
        </style>
        <div class="body"><slot></slot></div>
        <div class="title"><slot name="title"></slot></div>
      `;
    }
  }
  customElements.define('rv-panel', Panel);

  class Ribbon extends Base {
    render() {
      const b = (name, label = name) => `<button aria-label="${label}"><rv-icon name="${name}"></rv-icon></button>`;
      const arrow = '<rv-icon class="arrow" name="down"></rv-icon>';
      const row = (name, text) => `<button class="row"><rv-icon name="${name}"></rv-icon>${text}${arrow}</button>`;
      const big = (name, a, c) => `<button class="big"><rv-icon name="${name}"></rv-icon><span>${a}<br>${c}</span></button>`;
      return `
        <style>
          :host { display: flex; height: 120px; background: #e5edd8; border-bottom: 1px solid #c3c8bb; overflow: hidden; }
          button { border: 0; padding: 0; margin: 0; background: none; font: inherit; color: #ababab; white-space: nowrap; display: flex; align-items: center; justify-content: center; }
          .arrow { opacity: 0.8; }
          .select { box-sizing: border-box; width: 75px; height: 90px; margin: -3px 0 0 3px; padding-top: 8px; flex-direction: column; justify-content: flex-start; gap: 12px; border: 1px solid #3f85d6; background: #c5dcf5; color: #a0afc2; }
          .col { display: flex; flex-direction: column; align-items: center; }
          .pressed { width: 47px; height: 42px; margin-top: 4px; box-sizing: border-box; border: 1px solid #3f85d6; background: #c9dff5; }
          .paste { width: 90px; margin-left: 6px; flex-direction: column; justify-content: flex-start; gap: 7px; }
          .stack { display: grid; grid-auto-rows: 20px; row-gap: 12px; margin-left: 4px; }
          .row { justify-content: flex-start; gap: 7px; }
          .row .arrow { margin-left: 6px; }
          .bigs { display: grid; grid-template-columns: repeat(4, 36px); grid-auto-rows: 36px; gap: 10px 13px; }
          .smalls { display: grid; grid-template-columns: repeat(var(--n, 2), 20px); grid-auto-rows: 20px; gap: 12px; align-content: start; }
          .big { flex: none; flex-direction: column; justify-content: flex-start; gap: 7px; padding: 0 4px; }
          .big:first-child { margin-left: 4px; }
          .big span { line-height: 20px; }
        </style>
        <rv-panel style="--w: 86px">
          <button class="select"><rv-icon name="arrow"></rv-icon>Изменить</button>
          <span slot="title">Выбор</span><rv-icon slot="title" name="bigdown"></rv-icon>
        </rv-panel>
        <rv-panel style="--w: 70px">
          <div class="col" style="width: 70px">${b('types', 'Типоразмер')}<button class="pressed" aria-label="Свойства"><rv-icon name="props"></rv-icon></button></div>
          <span slot="title">Свойства</span>
        </rv-panel>
        <rv-panel style="--w: 133px">
          <button class="paste"><rv-icon name="paste"></rv-icon>Вставить${arrow}</button>
          <div class="stack">${b('cut', 'Вырезать')}${b('copydoc', 'Копировать')}${b('match', 'По образцу')}</div>
          <span slot="title">Буфер обмена</span>
        </rv-panel>
        <rv-panel style="--w: 210px">
          <div class="stack" style="width: 128px">${row('cope', 'Врезка')}${row('cutgeo', 'Вырезать')}${row('joingeo', 'Соединить')}</div>
          <div class="smalls">${b('g1')}${b('g2')}${b('g3')}${b('g4')}${b('g5')}${b('g6')}</div>
          <rv-icon class="arrow" name="down" style="margin: 40px 0 0 12px"></rv-icon>
          <span slot="title">Геометрия</span>
        </rv-panel>
        <rv-panel style="--w: 298px">
          <div class="bigs" style="margin: 0 14px 0 8px">${['align', 'offset', 'mirror', 'mirrordraw', 'move', 'copy', 'rotate', 'trim'].map((n) => b(n)).join('')}</div>
          <div class="smalls" style="--n: 3">${['split', 'split', 'unpin', 'array', 'scale', 'pin'].map((n) => b(n)).join('')}</div>
          <span slot="title">Изменить</span>
        </rv-panel>
        <rv-panel style="--w: 77px">
          <div class="smalls" style="grid-template-columns: 20px 6px 20px; column-gap: 8px; align-items: center; margin-left: 9px">
            ${b('bulb')}${arrow}${b('boxes')}${b('brush')}${arrow}${b('linework')}
          </div>
        </rv-panel>
        <rv-panel style="--w: 84px">
          <div class="col" style="margin-left: 17px; gap: 6px">${b('measure')}${b('angle')}</div>
          <rv-icon class="arrow" name="down" style="margin: 17px 0 0 10px"></rv-icon>
        </rv-panel>
        <rv-panel style="--w: 110px">
          <div class="smalls" style="grid-template-columns: 38px 38px; grid-auto-rows: 38px 20px; gap: 6px 10px; margin-left: 10px">
            ${b('group')}${b('similar')}${b('assembly')}${b('parts')}
          </div>
        </rv-panel>
        <rv-panel context style="--w: 218px">
          ${big('profile', 'Редактировать', 'профиль')}${big('reset', 'Восстановить', 'профиль')}
        </rv-panel>
        <rv-panel context style="--w: 308px">
          ${big('opening', 'Проем', 'в стене')}${big('attach', 'Присоединить', 'верх/основание')}${big('detach', 'Отсоединить', 'верх/основание')}
          <span slot="title">Изменение стены</span>
        </rv-panel>
      `;
    }
  }
  customElements.define('rv-ribbon', Ribbon);

  class ScrollBar extends Base {
    render() {
      const [before, thumb, after] = this.getAttribute('parts').split(' ');
      const across = this.hasAttribute('horizontal');
      return `
        <style>
          :host { display: flex; flex-direction: column; width: 20px; flex: none; background: #f0f0f0; }
          :host([horizontal]) { flex-direction: row; width: auto; height: 20px; flex: 1; }
          button { flex: 0 0 22px; border: 0; padding: 0; background: none; display: flex; align-items: center; justify-content: center; }
          :host([horizontal]) button { flex-basis: 18px; }
          .thumb { background: #cdcdcd; }
        </style>
        <button aria-label="Назад"><rv-icon name="${across ? 'sleft' : 'sup'}"></rv-icon></button>
        <div style="flex: ${before}"></div><div class="thumb" style="flex: ${thumb}"></div><div style="flex: ${after}"></div>
        <button aria-label="Вперед"><rv-icon name="${across ? 'sright' : 'sdown'}"></rv-icon></button>
      `;
    }
  }
  customElements.define('rv-scroll-bar', ScrollBar);

  class Select extends Base {
    render() {
      return `
        <style>
          :host { display: block; position: relative; color: #555; }
          select { appearance: none; box-sizing: border-box; width: 100%; height: 100%; margin: 0; padding: 0 24px 0 4px; border: 1px solid #adadad; border-radius: 0; background: #e1e1e1; font: inherit; color: #1b1b1b; }
          :host([flat]) { color: #b5b5b5; }
          :host([flat]) select { border: 0; padding-left: 2px; background: #fff; color: #868686; opacity: 1; }
          rv-icon { position: absolute; right: 4px; top: 50%; margin-top: -4px; pointer-events: none; }
        </style>
        <select aria-label="${this.getAttribute('label')}" ${this.hasAttribute('flat') ? 'disabled' : ''}><option>${this.getAttribute('value') || ''}</option></select>
        <rv-icon name="chevdown"></rv-icon>
      `;
    }
  }
  customElements.define('rv-select', Select);

  // Property table. Each group is [title, rows]; a row is [label, value, flags]
  // flags: d = disabled, c = checkbox, k = checked, s = selected, b = button, w = colour swatch, a = associate button
  class PropertyGrid extends Base {
    set groups(value) {
      this._groups = value;
      if (this.isConnected) this.shadowRoot.innerHTML = this.render();
    }
    cell(value, f, id) {
      if (f.includes('c')) return `<input type="checkbox" id="${id}" ${f.includes('k') ? 'checked' : ''} ${f.includes('d') ? 'disabled' : ''}>`;
      if (f.includes('w')) return `<button class="swatch"><i></i>${value}</button>`;
      if (f.includes('b')) return `<button class="edit">${value}</button>`;
      return value;
    }
    render() {
      const head = this.hasAttribute('headed')
        ? '<thead><tr><th>Параметр</th><th>Значение</th><th>=</th></tr></thead>' : '';
      const rows = (this._groups || []).map(([title, items], g) => `
        <tr class="group"><th colspan="3" scope="rowgroup"><div>${title}<button aria-label="Свернуть"><rv-icon name="fold"></rv-icon></button></div></th></tr>
        ${items.map(([label, value, f = ''], i) => `
          <tr class="${f.includes('d') ? 'off' : ''}">
            <td class="label">${f.includes('c') ? `<label for="p${g}-${i}">${label}</label>` : label}</td>
            <td class="${f.includes('s') ? 'selected' : ''} ${f.match(/[bw]/) ? 'tight' : ''}">${this.cell(value, f, `p${g}-${i}`)}</td>
            <td class="aux">${f.includes('a') ? '<button class="assoc" aria-label="Связать"></button>' : ''}</td>
          </tr>`).join('')}`).join('');
      return `
        <style>
          :host { display: block; overflow: hidden; background: #fff; }
          table { width: 100%; table-layout: fixed; border-spacing: 0; }
          td, th { box-sizing: border-box; height: 24px; padding: 0 2px; font-weight: 400; text-align: left; line-height: 22px; white-space: nowrap; overflow: hidden; border: 0 dotted #777; border-width: 0 1px 1px 0; }
          td.label { padding-left: var(--indent); }
          .off { color: #858585; }
          thead th { height: 27px; border: solid #000; border-width: 0 1px 1px 0; background: #f0f0f0; text-align: center; color: #333; }
          .group th { height: calc(24px + var(--gap, 0px)); padding: 0 5px 0 2px; border: solid #fff; border-width: var(--lead, 0px) 0 0; background: var(--group-bg); font-weight: var(--group-weight, 400); }
          .group div { display: flex; justify-content: space-between; align-items: center; }
          .group button { border: 0; padding: 0 0 6px; background: none; display: flex; }
          input { appearance: none; display: block; box-sizing: border-box; position: relative; width: 16px; height: 16px; margin: 0 0 0 1px; border: 1px solid #222; background: #fff; }
          input:disabled { border-color: #ccc; }
          input:checked::after { content: ""; position: absolute; left: 4px; top: 1px; width: 4px; height: 8px; border: solid #222; border-width: 0 1px 1px 0; transform: rotate(40deg); }
          td.selected { border: 1px solid #000; padding-left: 1px; }
          td.tight { padding: 0 1px; }
          td button { display: block; box-sizing: border-box; width: 100%; height: 22px; padding: 0; font: inherit; line-height: 20px; color: #333; }
          .edit { border: 1px solid #adadad; border-width: 1px 2px 2px 1px; background: #e1e1e1; }
          td .swatch { display: flex; align-items: center; gap: 5px; border: solid #555; border-width: 0 2px 1px 0; background: #f0f0f0; }
          .swatch i { width: 15px; height: 18px; margin-left: 1px; background: #000; }
          td.aux { padding: 0; }
          td .assoc { border: 1px solid #adadad; background: #ddd; }
        </style>
        <table>
          <colgroup><col style="width: var(--label-col)"><col><col style="width: var(--aux-col)"></colgroup>
          ${head}<tbody>${rows}</tbody>
        </table>
      `;
    }
  }
  customElements.define('rv-property-grid', PropertyGrid);

  class Properties extends Base {
    connectedCallback() {
      super.connectedCallback();
      this.shadowRoot.querySelector('rv-property-grid').groups = [
        ['Зависимости', [
          ['Линия привязки', 'Осевая линия сердцев...', 's'],
          ['Зависимость снизу', 'Этаж 2'],
          ['Смещение снизу', '0.0', 'a'],
          ['Примыкание снизу', '', 'dc'],
          ['Размер выступа снизу', '0.0', 'd'],
          ['Зависимость сверху', 'До уровня: Этаж 3'],
          ['Неприсоединенная выс...', '3000.0', 'd'],
          ['Смещение сверху', '0.0', 'a'],
          ['Примыкание сверху', '', 'dc'],
          ['Размер выступа сверху', '0.0', 'd'],
          ['Граница помещения', '', 'ck'],
          ['Связь с формообразую...', '', 'dc'],
        ]],
        ['Несущие конструкции', [
          ['Несущие конструкции', '', 'c'],
          ['Включить аналитическу...', '', 'dc'],
          ['Использование в констр...', 'Ненесущая', 'd'],
        ]],
        ['Размеры', [
          ['Длина', '8970.0', 'd'],
          ['Площадь', '23.820 м²', 'd'],
          ['Объем', '10.786 м³', 'd'],
        ]],
        ['Идентификация', [['Изображение', '']]],
      ];
    }
    render() {
      return `
        <style>
          :host { display: flex; flex-direction: column; width: 430px; flex: none; box-sizing: border-box; background: #f0f0f0; border-right: 1px solid #c4c4c4; }
          h2 { margin: 0; padding: 0 3px; font-size: 14px; line-height: 25px; font-weight: 400; color: #444; border-bottom: 1px solid #d5d5d5; }
          .type { display: flex; align-items: center; height: 88px; padding: 0 4px; gap: 6px; color: #444; }
          .type rv-icon { margin-left: auto; }
          .preview { width: 82px; height: 82px; background: #fff; border: 1px solid #ddd; box-sizing: border-box; display: flex; flex-direction: column; padding-top: 19px; }
          .brick { height: 10px; background: #d97b88; border: 1px solid #444; border-left: 0; }
          .gap { height: 2px; border: 1px solid #888; border-width: 0 1px 1px 0; background: #fff; }
          .core { height: 26px; background: #dadada; border: 1px solid #444; border-width: 0 1px 1px 0; }
          .filter { display: flex; height: 27px; padding-left: 1px; gap: 7px; }
          .filter rv-select { width: 294px; }
          .filter button { border: 0; padding: 0; background: none; font: inherit; color: #222; display: flex; align-items: center; gap: 4px; }
          .props { display: flex; flex: 1; min-height: 0; padding: 0 3px 0 1px; overflow: hidden; }
          rv-property-grid { flex: 1; height: 555px; --label-col: 196px; --aux-col: 15px; --indent: 10px; --group-bg: #dcdcdc; }
          rv-scroll-bar { height: 555px; }
          .foot { display: flex; justify-content: space-between; align-items: center; height: 33px; padding: 0 3px; border-bottom: 2px solid #c8c8c8; }
          a { color: #1a66c2; margin-bottom: 6px; }
          .foot button { height: 25px; width: 86px; padding: 0; border: 1px solid #c2c2c2; background: #ccc; color: #888; font: inherit; }
          .browser { height: 29px; border-bottom: 0; }
          .sliver { height: 5px; margin: -5px 20px 0 8px; background: #fff; }
        </style>
        <h2>Свойства</h2>
        <div class="type">
          <div class="preview"><div class="brick"></div><div class="gap"></div><div class="core"></div></div>
          <div>Базовая стена<br>Внешняя стена</div>
          <rv-icon name="bigdown"></rv-icon>
        </div>
        <div class="filter">
          <rv-select label="Фильтр свойств" value="Стены (1)"></rv-select>
          <button><rv-icon name="edittype"></rv-icon>Изменить тип</button>
        </div>
        <div class="props"><rv-property-grid></rv-property-grid><rv-scroll-bar parts="0 389 123"></rv-scroll-bar></div>
        <div class="foot"><a href="#help">Справка по свойствам</a><button disabled>Применить</button></div>
        <h2 class="browser">Диспетчер проекта - проект.1</h2>
        <div class="sliver"></div>
      `;
    }
  }
  customElements.define('rv-properties', Properties);

  class Model extends Base {
    // scattered specks of the plaster hatch, seeded so they stay put
    specks() {
      let seed = 7;
      const next = () => (seed = (seed * 16807) % 2147483647) / 2147483647;
      let d = '';
      for (let i = 0; i < 400; i++) {
        d += `M${1204 + Math.floor(next() * 84)} ${425 + Math.floor(next() * 265)}h1`;
      }
      return d;
    }
    render() {
      let quoins = '';
      for (let i = 0; i < 16; i++) {
        const y = 476 + i * 12.5;
        quoins += `<path d="M1289 ${y + 2}l12-3v9l-12 3z"/>`;
      }
      return `
        <style>
          :host { display: block; }
          svg { display: block; width: 100%; height: 100%; }
        </style>
        <svg viewBox="437 248 1436 716" role="img" aria-label="3D вид дома">
          <g fill="#2b3d25" stroke="#0c120a">
            <path d="M700 579l-98 20-2 2v20l100 27v-26l-33-10 33-7z"/>
            <path d="M617 600l50 12M1290 608l151 42 1 1v20l-242 51v-28l90-20 89-17-89-24z"/>
            <path d="M1380 657l44-9" fill="none"/>
          </g>
          <path d="M1302 638l76 20-76 16z" fill="#fff"/>
          <path d="M1200 692l102-19v4l-102 19z" fill="#b9aaa2" stroke="#222"/>
          <path d="M1200 422l102 56v195l-14 2-88 16z" fill="#ffff80"/>
          <clipPath id="wall"><path d="M1200 424l88 50v199l-88 17z"/></clipPath>
          <path d="${this.specks()}" clip-path="url(#wall)" stroke="#4a4a20" stroke-width="1"/>
          <g fill="#777" stroke="#111" stroke-width="1.500">${quoins}</g>
          <path d="M1199 390h12v29l-12-4z" fill="#808080" stroke="#222"/>
          <path d="M1200 378l12 2 3 4-2 5-13 2z" fill="#fff" stroke="#111"/>
          <path d="M1202 378l5 3 6-2M1205 383h8" stroke="#000" stroke-width="2" fill="none"/>
          <path d="M1200 412l113 61v10l-12-6-101-54z" fill="#0b860b" stroke="#063006"/>
          <path d="M1200 425l100 54" stroke="#111" stroke-width="2"/>
          <path d="M1227 514l41-8v50l-41 9z" fill="#fff" stroke="#111"/>
          <path d="M1229 517l36-7v44l-36 8z" fill="#6f7a8c" stroke="#111b2c" stroke-width="3"/>
          <path d="M1232 519l19-4v17l-19 4z" fill="#c8dcec"/>
          <path d="M1230 533l12 4 10 6-21-2z" fill="#3a4250"/>
          <path d="M1236 516v44M1241 515v44M1252 513v44M1229 536l36-7M1229 549l36-7" stroke="#111b2c" stroke-width="2"/>
          <path d="M1229 560l36-7" stroke="#fff" stroke-dasharray="2 2"/>
        </svg>
      `;
    }
  }
  customElements.define('rv-model', Model);

  class ViewCube extends Base {
    render() {
      return `
        <style>:host, svg { display: block; }</style>
        <svg width="136" height="96" viewBox="1715 306 136 96" font-size="9" fill="#8d8d8d">
          <defs><radialGradient id="sh"><stop offset="0" stop-color="#888"/><stop offset="1" stop-color="#fff" stop-opacity="0"/></radialGradient></defs>
          <ellipse cx="1783" cy="370" rx="66" ry="22" fill="#f1f1f1" stroke="#c4c4c4"/>
          <ellipse cx="1783" cy="368" rx="50" ry="15" fill="#fff" stroke="#d0d0d0"/>
          <ellipse cx="1784" cy="367" rx="42" ry="12" fill="url(#sh)"/>
          <path d="M1726 380l5-2 4 3M1820 384l6-3 3 4M1824 355l4 2M1742 354l-4 3" stroke="#aaa" fill="none" stroke-width="2"/>
          <path d="M1749 316l36-5 32 6-37 6z" fill="#f1f1f1" stroke="#aaa"/>
          <path d="M1749 316l31 7v51l-31-11z" fill="#e8e8e8" stroke="#a5a5a5"/>
          <path d="M1780 323l37-6v46l-37 11z" fill="#eee" stroke="#a5a5a5"/>
          <path d="M1774 316l6-2 3 2 6-2 4 2" stroke="#bbb" fill="none"/>
          <text transform="translate(1752 343) skewY(14)">Сзади</text>
          <text transform="translate(1786 348) skewY(-10)">Слева</text>
        </svg>
      `;
    }
  }
  customElements.define('rv-view-cube', ViewCube);

  class NavBar extends Base {
    render() {
      return `
        <style>:host, svg { display: block; }</style>
        <svg width="36" height="120" viewBox="0 0 36 120" fill="none" stroke="#b5b5b5" role="img" aria-label="Навигация">
          <rect x="1" y="1" width="33" height="116" rx="4" fill="#f8f8f8" stroke-width="1.500"/>
          <circle cx="27" cy="8" r="3.500" stroke-width="1.500"/><circle cx="27" cy="110" r="3.500" stroke-width="1.500"/><path d="M25 110h4M25 8h4"/>
          <path d="M18 22h10v11a10 10 0 1 1-10-11z" stroke-width="1.500"/><circle cx="18" cy="32" r="6" stroke-width="1.500"/>
          <path d="M13 36l-3 3M23 36l3 3M4 59h26"/>
          <path d="M15 52h5l-2 3zM15 94h5l-2 3z" fill="#888" stroke="none"/>
          <path d="M10 68h10v11H10z" fill="#bcd8b0" stroke="#aaa"/><circle cx="21" cy="78" r="4" fill="#fff"/><path d="M24 81l3 3" stroke-width="2"/>
        </svg>
      `;
    }
  }
  customElements.define('rv-nav-bar', NavBar);

  class Viewport extends Base {
    render() {
      const controls = ['detail', 'cube', 'sun', 'shadow', 'pot', 'crop', 'cropview', 'lock', 'glasses', 'reveal', 'temp', 'analytic', 'displace', 'dims'];
      return `
        <style>
          :host { display: flex; flex-direction: column; flex: 1; min-width: 0; margin-left: 2px; background: #f0f0f0; border: solid #fff; border-width: 0 2px 2px 1px; }
          .tabs { display: flex; align-items: center; height: 25px; background: #ccc; flex: none; }
          .tab { display: flex; align-items: center; box-sizing: border-box; width: 159px; height: 25px; padding: 0 6px 0 4px; gap: 10px; background: #fff; color: #c0c0c0; font-weight: 700; }
          button { border: 0; padding: 0; background: none; display: flex; }
          .tab button { margin-left: auto; }
          .list { margin: 0 4px 0 auto; }
          .middle { display: flex; flex: 1; min-height: 0; }
          .canvas { position: relative; flex: 1; min-width: 0; background: #fff; overflow: hidden; }
          rv-model { width: 100%; height: 100%; }
          rv-view-cube { position: absolute; top: 58px; right: 23px; }
          rv-nav-bar { position: absolute; top: 173px; right: 0; }
          .bottom { display: flex; align-items: center; height: 20px; flex: none; }
          .scale { width: 93px; padding-left: 28px; box-sizing: border-box; font-size: 13px; }
          .controls { display: flex; gap: 5px; }
          .bottom rv-icon[name=grip] { margin: 6px 2px 0 9px; }
        </style>
        <div class="tabs">
          <div class="tab"><rv-icon name="viewhouse"></rv-icon>{3D}<button aria-label="Закрыть вид"><rv-icon name="close"></rv-icon></button></div>
          <button class="list" aria-label="Список видов"><rv-icon name="custom"></rv-icon></button>
        </div>
        <div class="middle">
          <div class="canvas"><rv-model></rv-model><rv-view-cube></rv-view-cube><rv-nav-bar></rv-nav-bar></div>
          <rv-scroll-bar parts="326 21 325"></rv-scroll-bar>
        </div>
        <div class="bottom">
          <span class="scale">1 : 100</span>
          <div class="controls">${controls.map((n) => `<button aria-label="${n}"><rv-icon name="${n}"></rv-icon></button>`).join('')}</div>
          <rv-scroll-bar horizontal parts="466 21 465"></rv-scroll-bar>
          <rv-icon name="grip"></rv-icon>
        </div>
      `;
    }
  }
  customElements.define('rv-viewport', Viewport);

  class StatusBar extends Base {
    render() {
      return `
        <style>
          :host { display: flex; align-items: center; height: 31px; flex: none; background: #cbcbcb; border-bottom: 1px solid #111; color: #222; }
          span { padding-top: 2px; }
          .mode { width: 498px; padding-left: 1px; box-sizing: border-box; }
          rv-select { width: 254px; height: 23px; }
          .mid { display: flex; align-items: center; gap: 8px; }
          .mid span { width: 22px; }
          .mid rv-icon { margin-left: 3px; }
          .right { display: flex; align-items: center; gap: 10px; margin: 0 101px 0 auto; }
          .right span { margin-left: -10px; }
        </style>
        <span class="mode">Режим ожидания</span>
        <div class="mid">
          <rv-icon name="workset"></rv-icon>
          <rv-select flat label="Рабочий набор"></rv-select>
          <rv-icon name="request"></rv-icon><span>:0</span>
          <rv-icon name="square"></rv-icon><rv-icon name="option"></rv-icon>
          <rv-select flat label="Вариант конструкции" value="Главная модель"></rv-select>
        </div>
        <div class="right">
          ${['link1', 'link2', 'link3', 'link4', 'link5', 'gear', 'funnel'].map((n) => `<rv-icon name="${n}"></rv-icon>`).join('')}<span>:1</span>
        </div>
      `;
    }
  }
  customElements.define('rv-status-bar', StatusBar);

  class Dialog extends Base {
    connectedCallback() {
      super.connectedCallback();
      this.shadowRoot.querySelector('rv-property-grid').groups = [
        ['Строительство', [
          ['Структура', 'Изменить...', 'b'],
          ['Огибание в местах вставки', 'Нет'],
          ['Огибание в торцах стен', 'Нет'],
          ['Толщина', '470.0', 'd'],
          ['Функция', 'Наружные слои'],
        ]],
        ['Графика', [
          ['Штриховка при низкой дета', ''],
          ['Цвет штриховки при низкой', 'Черный', 'w'],
        ]],
        ['Материалы и отделка', [['Материал несущих конструк', 'Бетонные модули для кладки', 'd']]],
        ['Свойства аналитической модели', [
          ['Коэффициент теплопередач', '0.4775 Вт/(м²·К)', 'd'],
          ['Термостойкость', '2.0941 (м²·К)/Вт', 'd'],
          ['Теплоемкость', '58.25 кДж/К', 'd'],
          ['Коэффициент поглощения', '0.700000'],
          ['Шероховатость', '3'],
        ]],
      ];
    }
    render() {
      return `
        <style>
          :host { display: block; box-sizing: border-box; width: 508px; border: 1px solid #5a5a5a; background: #f0f0f0; color: #111; }
          header { display: flex; align-items: center; justify-content: space-between; height: 37px; padding: 0 15px 0 9px; background: #fff; }
          h2 { margin: 0; font-size: 14px; font-weight: 400; }
          header button { border: 0; padding: 0; background: none; display: flex; }
          .body { position: relative; padding: 15px 13px 15px 25px; font-family: "DejaVu Sans Condensed", "Noto Sans", sans-serif; font-size: 12px; }
          .form { display: flex; gap: 14px; }
          .fields { flex: 1; display: grid; grid-template-columns: 81px 1fr; grid-auto-rows: 24px; row-gap: 16px; align-items: center; align-content: start; }
          rv-select { height: 24px; }
          .side { display: flex; flex-direction: column; gap: 10px; width: 124px; padding-top: 1px; }
          .body button { height: 28px; padding: 0; border: 1px solid #adadad; background: #e1e1e1; font: inherit; color: #111; }
          .body button:disabled { background: #ccc; border-color: #c4c4c4; color: #8a8a8a; }
          .caption { margin: 6px 0 4px; line-height: 22px; }
          .table { display: flex; height: 463px; margin-right: 3px; box-sizing: border-box; border: solid #696969; border-width: 2px 0 0 2px; border-bottom: 1px solid #fff; font: 14px/20px "Noto Sans", "Open Sans", sans-serif; }
          rv-property-grid { flex: 1; --label-col: 202px; --aux-col: 16px; --indent: 2px; --gap: 5px; --lead: 4px; --group-bg: #9bb3d4; --group-weight: 700; }
          rv-scroll-bar { margin-left: 2px; }
          a { display: block; width: max-content; margin: 14px 0 20px; color: #1a66c2; }
          .actions { display: grid; grid-template-columns: 103px 1fr 103px 103px 103px; column-gap: 9px; margin-left: -1px; }
          .actions button:nth-child(2) { grid-column: 3; }
          .body .ok { border: 2px solid #0f75cf; }
          .cursor { position: absolute; left: 205px; bottom: 17px; }
          .grip { position: absolute; right: 2px; bottom: 2px; }
        </style>
        <header><h2>Свойства типа</h2><button aria-label="Закрыть"><rv-icon name="thinx"></rv-icon></button></header>
        <div class="body">
          <div class="form">
            <div class="fields">
              <span>Семейство:</span><rv-select label="Семейство" value="Сист. семейство: Базовая стена"></rv-select>
              <span>Тип:</span><rv-select label="Тип" value="Внешняя стена"></rv-select>
            </div>
            <div class="side"><button disabled>Загрузить...</button><button>Копировать...</button><button>Переименовать...</button></div>
          </div>
          <div class="caption">Параметры типа</div>
          <div class="table"><rv-property-grid headed></rv-property-grid><rv-scroll-bar parts="0 209 209"></rv-scroll-bar></div>
          <a href="#what">Какова функция данных свойств?</a>
          <div class="actions"><button>&lt;&lt; Просмотр</button><button class="ok">ОК</button><button>Отмена</button><button>Применить</button></div>
          <rv-icon class="cursor" name="cursor"></rv-icon>
          <rv-icon class="grip" name="grip"></rv-icon>
        </div>
      `;
    }
  }
  customElements.define('rv-dialog', Dialog);

  class App extends Base {
    render() {
      return `
        <style>
          :host { display: block; box-sizing: border-box; height: 100vh; padding: 0 16px 11px 0; overflow: hidden; }
          .window { display: flex; flex-direction: column; box-sizing: border-box; height: 100%; padding: 0 4px; background: #cbcbcb; border-bottom: 2px solid #c3ccc0; }
          .options { height: 34px; line-height: 34px; flex: none; padding-left: 10px; background: #e5edd8; border-bottom: 1px solid #c5cdbc; }
          rv-ribbon, rv-tabs, rv-title-bar { flex: none; }
          .work { display: flex; flex: 1; min-height: 0; border-bottom: 1px solid #cbcbcb; }
          rv-dialog { position: absolute; left: 696px; top: 131px; }
        </style>
        <div class="window">
          <rv-title-bar></rv-title-bar>
          <rv-tabs></rv-tabs>
          <rv-ribbon></rv-ribbon>
          <div class="options">Изменить | Стены</div>
          <div class="work"><rv-properties></rv-properties><rv-viewport></rv-viewport></div>
          <rv-status-bar></rv-status-bar>
        </div>
        <rv-dialog></rv-dialog>
      `;
    }
  }
  customElements.define('rv-app', App);
</script>
</body>
</html>
